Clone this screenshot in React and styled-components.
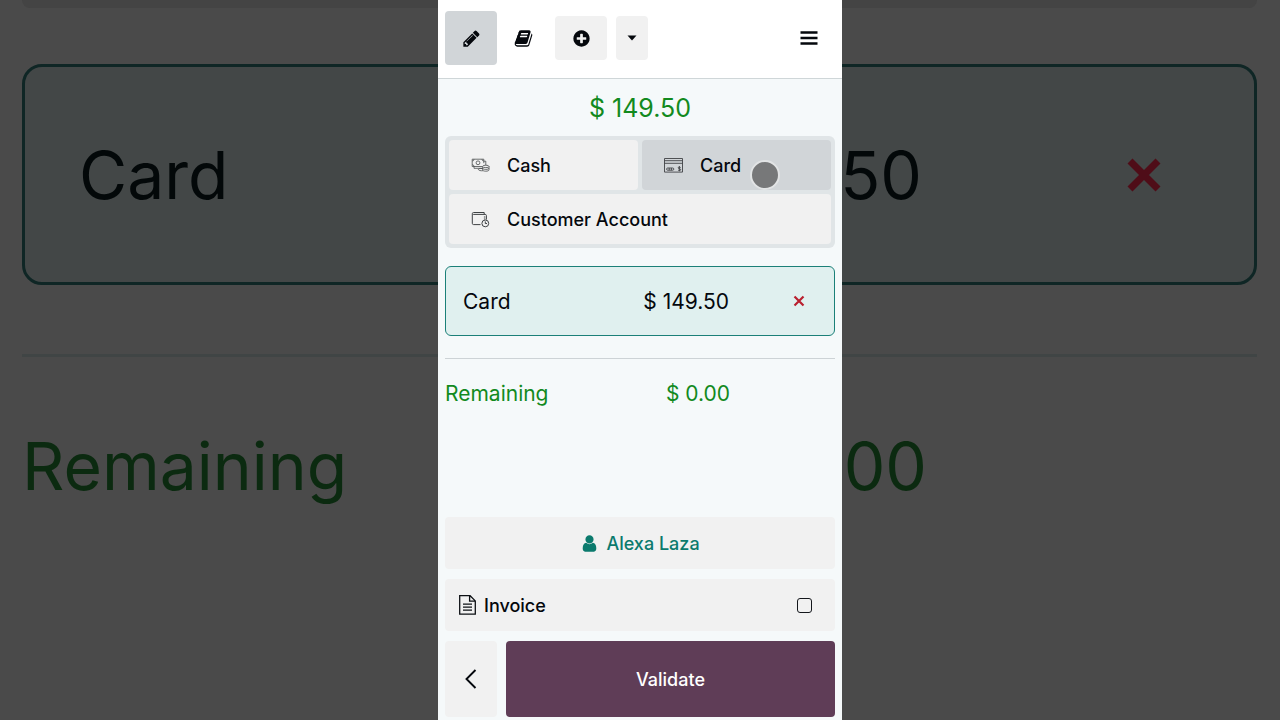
import React, { useState } from 'react'
import styled, { createGlobalStyle } from 'styled-components'

const GlobalStyle = createGlobalStyle`
    * {
        box-sizing: border-box;
    }
    body {
        margin: 0;
        background-color: #4a4a4a;
        font-family: Inter, "Liberation Sans", sans-serif;
        color: #05080d;
    }
    button, input {
        font: inherit;
        color: inherit;
    }
`
const Stage = styled.div`
    display: grid;
    grid-template-columns: minmax(0, 1fr);
    min-height: 100vh;
    overflow: hidden;
`

/* enlarged, dimmed copy of the payment lines behind the phone */
const Backdrop = styled.div`
    grid-area: 1 / 1;
    display: flex;
    flex-direction: column;
    padding: 0 23px 0 22px;
    font-size: 66px;
    line-height: 84px;
    color: #030809;
`
const BackdropMethods = styled.div`
    height: 8px;
    border-radius: 0 0 20px 20px;
    background-color: #444;
`
const BackdropLine = styled.div`
    display: grid;
    grid-template-columns: 1fr auto 116px;
    column-gap: 164px;
    align-items: center;
    margin-top: 56px;
    padding: 65px 52px 65px 54px;
    height: 221px;
    border: 3px solid #0f2625;
    border-radius: 20px;
    background-color: #434747;
`
const BackdropCross = styled.svg`
    justify-self: center;
    width: 36px;
    height: 36px;
    stroke: #4f0d18;
`
const BackdropTotal = styled.div`
    display: flex;
    justify-content: space-between;
    margin-top: 69px;
    padding: 67px 330px 0 0;
    border-top: 3px solid #404545;
    color: #0b2a10;
`

const Phone = styled.main`
    grid-area: 1 / 1;
    justify-self: center;
    z-index: 1;
    display: flex;
    flex-direction: column;
    width: 100%;
    max-width: 404px;
    background-color: #f5f9fa;
`
const Header = styled.header`
    display: flex;
    align-items: center;
    padding: 11px 7px 13px;
    border-bottom: 1px solid #cfd6d8;
    background-color: #fff;
`
const BaseButton = styled.button`
    display: flex;
    align-items: center;
    justify-content: center;
    padding: 0;
    border: none;
    border-radius: 4px;
    background-color: #f1f1f1;
    cursor: pointer;
`
const HeaderButton = styled(BaseButton)`
    width: ${props => props.$width || 52}px;
    height: ${props => props.$tall ? 54 : 44}px;
    margin-right: ${props => props.$gap || 0}px;
    background-color: ${props => props.$bg || '#f1f1f1'};
`
const MenuButton = styled(HeaderButton)`
    margin-left: auto;
`
const Content = styled.div`
    flex: 1;
    display: flex;
    flex-direction: column;
    padding: 13px 7px 3px;
`
const Total = styled.h1`
    margin: 0;
    font-size: 25px;
    line-height: 32px;
    font-weight: 400;
    text-align: center;
    color: #128a1e;
`
const Methods = styled.div`
    display: grid;
    grid-template-columns: 1fr 1fr;
    gap: 4px;
    margin-top: 12px;
    padding: 4px;
    border-radius: 6px;
    background-color: #e0e5e7;
`
const Method = styled(BaseButton)`
    position: relative;
    justify-content: flex-start;
    gap: 17px;
    height: 50px;
    padding: 0 22px;
    font-size: 18px;
    font-weight: 500;
    grid-column: ${props => props.$wide ? '1 / -1' : 'auto'};
    background-color: ${props => props.$active ? '#d1d5d8' : '#f1f1f1'};
`
const Touch = styled.span`
    position: absolute;
    top: 20px;
    left: 108px;
    width: 30px;
    height: 30px;
    border: 2px solid #e2e4e5;
    border-radius: 50%;
    background-color: #777879;
`
const Line = styled.div`
    display: grid;
    grid-template-columns: 1fr auto 36px;
    column-gap: 52px;
    align-items: center;
    height: 70px;
    margin-top: 18px;
    padding: 0 17px;
    border: 1px solid #1b8078;
    border-radius: 6px;
    background-color: #e0f0ef;
    font-size: 21px;
`
const RemoveButton = styled(BaseButton)`
    height: 36px;
    background-color: transparent;
    color: #b9202f;
`
const Remaining = styled.div`
    display: flex;
    justify-content: space-between;
    margin-top: 22px;
    padding: 22px 105px 0 0;
    border-top: 1px solid #cdd3d6;
    font-size: 21px;
    line-height: 26px;
    color: #128a1e;
`
const Actions = styled.div`
    display: flex;
    flex-direction: column;
    gap: 10px;
    margin-top: auto;
    padding-top: 20px;
    font-size: 18px;
    font-weight: 500;
`
const Customer = styled(BaseButton)`
    gap: 7px;
    height: 52px;
    color: #0b7a6d;
`
const Invoice = styled.label`
    display: flex;
    align-items: center;
    gap: 8px;
    height: 52px;
    padding: 0 23px 0 14px;
    border-radius: 4px;
    background-color: #f1f1f1;
    cursor: pointer;
`
const Checkbox = styled.input`
    appearance: none;
    width: 15px;
    height: 15px;
    margin: 0 0 0 auto;
    border: 1px solid #14171c;
    border-radius: 3px;
    &:checked {
        background-color: #5f3d57;
    }
`
const Footer = styled.div`
    display: grid;
    grid-template-columns: 52px 1fr;
    gap: 9px;
    height: 76px;
`
const Validate = styled(BaseButton)`
    background-color: #5f3d57;
    color: #fff;
`

const Glyph = ({ size = 19, d }) => (
    <svg width={size} height={size} viewBox="0 0 1792 1792" fill="currentColor" aria-hidden="true">
        <path d={d} />
    </svg>
)

const PENCIL = 'M491 1536l91-91-235-235-91 91v107h128v128h107zm523-928q0-22-22-22-10 0-17 7l-542 542q-7 7-7 17 0 22 22 22 10 0 17-7l542-542q7-7 7-17zm-54-192l416 416-832 832h-416v-416zm683 96q0 53-37 90l-166 166-416-416 166-165q36-38 90-38 53 0 91 38l235 234q37 39 37 91z'
const BOOK = 'M1703 478q40 57 18 129l-275 906q-19 64-76.5 107.5t-122.5 43.5h-923q-77 0-148.5-53.5t-99.5-131.5q-24-67-2-127 0-4 3-27t4-37q1-8-3-21.5t-3-19.5q2-11 8-21t16.5-23.5 16.5-23.5q23-38 45-91.5t30-91.5q3-10 .5-30t-.5-28q3-11 17-28t17-23q21-36 42-92t25-90q1-9-2.5-32t.5-28q4-13 22-30.5t22-22.5q19-26 42.5-84.5t27.5-96.5q1-8-3-25.5t-2-26.5q2-8 9-18t18-23 17-21q8-12 16.5-30.5t15-35 16-36 19.5-32 26.5-23.5 36-11.5 47.5 5.5l-1 3q38-9 51-9h761q74 0 114 56t18 130l-274 906q-36 119-71.5 153.5t-128.5 34.5h-869q-27 0-38 15-11 16-1 43 24 70 144 70h923q29 0 56-15.5t35-41.5l300-987q7-22 5-57 38 15 59 43zm-1064 2q-4 13 2 22.5t20 9.5h608q13 0 25.5-9.5t16.5-22.5l21-64q4-13-2-22.5t-20-9.5h-608q-13 0-25.5 9.5t-16.5 22.5zm-83 256q-4 13 2 22.5t20 9.5h608q13 0 25.5-9.5t16.5-22.5l21-64q4-13-2-22.5t-20-9.5h-608q-13 0-25.5 9.5t-16.5 22.5z'
const PLUS = 'M1344 960v-128q0-26-19-45t-45-19h-256v-256q0-26-19-45t-45-19h-128q-26 0-45 19t-19 45v256h-256q-26 0-45 19t-19 45v128q0 26 19 45t45 19h256v256q0 26 19 45t45 19h128q26 0 45-19t19-45v-256h256q26 0 45-19t19-45zm320-64q0 209-103 385.5t-279.5 279.5-385.5 103-385.5-103-279.5-279.5-103-385.5 103-385.5 279.5-279.5 385.5-103 385.5 103 279.5 279.5 103 385.5z'
const USER = 'M1536 1399q0 109-62.5 187t-150.5 78h-854q-88 0-150.5-78t-62.5-187q0-85 8.5-160.5t31.5-152 58.5-131 94-89 134.5-34.5q131 128 313 128t313-128q76 0 134.5 34.5t94 89 58.5 131 31.5 152 8.5 160.5zm-256-887q0 159-112.5 271.5t-271.5 112.5-271.5-112.5-112.5-271.5 112.5-271.5 271.5-112.5 271.5 112.5 112.5 271.5z'

const CashIcon = () => (
    <svg width="19" height="18" viewBox="0 0 19 18" fill="none" stroke="#4a4c4e" strokeWidth="0.8" aria-hidden="true">
        <path d="M11 10.5H1.2V3.2h11.6v4" />
        <path d="M3 3.2q0 1.8-1.8 1.8M1.2 8.7Q3 8.7 3 10.5M11 3.2q0 1.8 1.8 1.8" />
        <circle cx="7" cy="6.8" r="1.9" />
        <path d="M3 10.5v1.8h8M12.8 5.2h2v4" />
        <ellipse cx="14.8" cy="10.4" rx="3.2" ry="1.2" />
        <path d="M11.6 10.4v3.4c0 .9 1.4 1.4 3.2 1.4s3.2-.5 3.2-1.4v-3.4M11.6 12.1c0 .8 1.4 1.3 3.2 1.3s3.2-.5 3.2-1.3M11.6 12.6c-2.6-.4-4.2.1-4.2.8 0 1 2.4 1.6 4.6 1.3" />
    </svg>
)

const CardIcon = () => (
    <svg width="19" height="18" viewBox="0 0 19 18" fill="none" stroke="#3f4245" strokeWidth="0.9" aria-hidden="true">
        <path d="M0.5 2.5h18v13.6h-18zM0.5 4.7h18M0.5 7.3h18" />
        <rect x="2.6" y="12" width="7.2" height="2.2" rx="1.1" />
        <path d="M5.2 12v2.2M7.4 12v2.2" />
        <path d="M16.6 11.6q-.5-.6-1.3-.6-1.1 0-1.1.8t1.2.9q1.3.2 1.3 1t-1.3.8q-.9 0-1.4-.6M15.4 10.1v5.2" />
    </svg>
)

const AccountIcon = () => (
    <svg width="19" height="18" viewBox="0 0 19 18" fill="none" stroke="#3f4245" strokeWidth="1" aria-hidden="true">
        <path d="M9.5 14.6H2.6q-1.3 0-1.3-1.3V3.7q0-1.2 1.3-1.2h10.6v1.9M2.2 4.4h12q1.2 0 1.2 1.2v4" />
        <path d="M13.6 6.6v.8M13.6 8.6v.8" strokeWidth="1.4" />
        <circle cx="14.3" cy="13.4" r="3.4" />
        <path d="M14.3 11.4v2.1h1.7" />
    </svg>
)

const InvoiceIcon = () => (
    <svg width="17" height="20" viewBox="0 0 17 20" fill="none" stroke="#0d1014" strokeWidth="1.3" aria-hidden="true">
        <path d="M0.7 0.7h10.4l5.2 5.2v13.2H0.7zM10.6 0.9v5.3h5.4M4 9.2h9M4 12.2h9M4 15.2h9" />
    </svg>
)

const App = () => {
    const [invoice, setInvoice] = useState(false)

    return (
        <>
            <GlobalStyle />
            <Stage>
                <Backdrop aria-hidden="true">
                    <BackdropMethods />
                    <BackdropLine>
                        <span>Card</span>
                        <span>50</span>
                        <BackdropCross viewBox="0 0 36 36" fill="none" strokeWidth="7">
                            <path d="M4 4l28 28M32 4L4 32" />
                        </BackdropCross>
                    </BackdropLine>
                    <BackdropTotal>
                        <span>Remaining</span>
                        <span>00</span>
                    </BackdropTotal>
                </Backdrop>
                <Phone>
                    <Header>
                        <HeaderButton $tall $bg="#d1d5d8" aria-label="Register">
                            <Glyph d={PENCIL} />
                        </HeaderButton>
                        <HeaderButton $gap={6} $bg="#fff" aria-label="Orders">
                            <Glyph d={BOOK} />
                        </HeaderButton>
                        <HeaderButton $gap={9} aria-label="New order">
                            <Glyph d={PLUS} />
                        </HeaderButton>
                        <HeaderButton $width={32} aria-label="Open orders">
                            <svg width="10" height="6" viewBox="0 0 10 6" aria-hidden="true">
                                <path d="M0.5 0.5h9L5 5.5z" fill="currentColor" />
                            </svg>
                        </HeaderButton>
                        <MenuButton $bg="#fff" aria-label="Menu">
                            <svg width="18" height="14" viewBox="0 0 18 14" aria-hidden="true">
                                <path d="M0.5 1.5h17M0.5 7h17M0.5 12.5h17" stroke="currentColor" strokeWidth="2.4" />
                            </svg>
                        </MenuButton>
                    </Header>
                    <Content>
                        <Total>$ 149.50</Total>
                        <Methods>
                            <Method>
                                <CashIcon />
                                Cash
                            </Method>
                            <Method $active>
                                <CardIcon />
                                Card
                                <Touch />
                            </Method>
                            <Method $wide>
                                <AccountIcon />
                                Customer Account
                            </Method>
                        </Methods>
                        <Line>
                            <span>Card</span>
                            <span>$ 149.50</span>
                            <RemoveButton aria-label="Remove payment">
                                <svg width="12" height="12" viewBox="0 0 12 12" aria-hidden="true">
                                    <path d="M1.5 1.5l9 9M10.5 1.5l-9 9" stroke="currentColor" strokeWidth="2.2" />
                                </svg>
                            </RemoveButton>
                        </Line>
                        <Remaining>
                            <span>Remaining</span>
                            <span>$ 0.00</span>
                        </Remaining>
                        <Actions>
                            <Customer>
                                <Glyph d={USER} />
                                Alexa Laza
                            </Customer>
                            <Invoice>
                                <InvoiceIcon />
                                Invoice
                                <Checkbox type="checkbox" checked={invoice} onChange={e => setInvoice(e.target.checked)} />
                            </Invoice>
                            <Footer>
                                <BaseButton aria-label="Back">
                                    <svg width="12" height="20" viewBox="0 0 12 20" fill="none" aria-hidden="true">
                                        <path d="M10.5 1L1.5 10l9 9" stroke="currentColor" strokeWidth="1.9" />
                                    </svg>
                                </BaseButton>
                                <Validate>Validate</Validate>
                            </Footer>
                        </Actions>
                    </Content>
                </Phone>
            </Stage>
        </>
    )
}

export default App
